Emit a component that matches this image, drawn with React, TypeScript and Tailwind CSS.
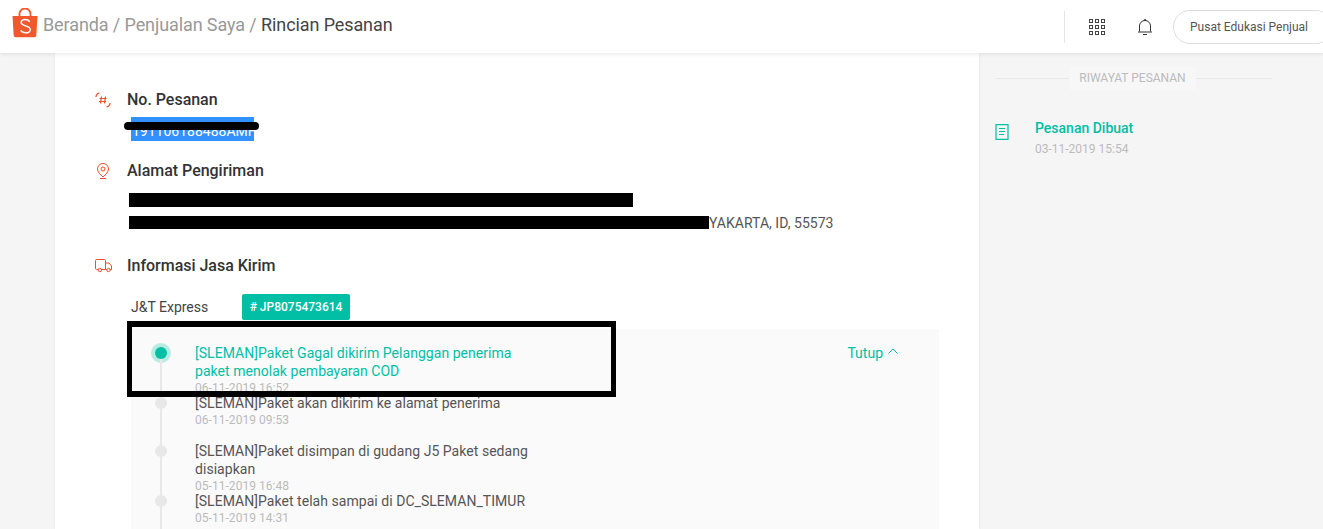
import React from "react";

const events = [
  { text: "[SLEMAN]Paket akan dikirim ke alamat penerima", time: "06-11-2019 09:53", h: "h-[48px]" },
  { text: "[SLEMAN]Paket disimpan di gudang J5 Paket sedang disiapkan", time: "05-11-2019 16:48", h: "h-[50px]" },
  { text: "[SLEMAN]Paket telah sampai di DC_SLEMAN_TIMUR", time: "05-11-2019 14:31", h: "h-[40px]" },
];

function Logo() {
  return (
    <svg width="26" height="30" viewBox="0 0 26 30" className="shrink-0 mb-[8px]">
      <path d="M7.500 8V6a5.500 5.500 0 0 1 11 0v2" fill="none" stroke="#f1582c" strokeWidth="1.800" />
      <path d="M0.500 8h25l-1.200 19.500a2 2 0 0 1-2 1.800H3.700a2 2 0 0 1-2-1.800z" fill="#f1582c" />
      <path d="M17.800 13.800c-1.100-1.400-2.800-2.200-4.600-2.200-2.300 0-4 1.200-4 3 0 4 9 2.600 9 6.800 0 2-2 3.400-4.500 3.400-2.100 0-3.800-.8-5.100-2.300" fill="none" stroke="#fff" strokeWidth="1.500" />
    </svg>
  );
}

function Title({ icon, children, className }: { icon: React.ReactNode; children: React.ReactNode; className?: string }) {
  return (
    <div className={"flex items-center h-[22px] " + (className ?? "")}>
      <div className="w-[32px] flex justify-start shrink-0">{icon}</div>
      <h3 className="text-[16px] font-medium text-[#333] tracking-[-0.02px]">{children}</h3>
    </div>
  );
}

export default function App() {
  return (
    <div className="w-[1323px] h-[529px] overflow-hidden bg-[#f5f5f5] font-['Roboto',sans-serif] flex flex-col">
      <header className="relative z-10 h-[53px] shrink-0 bg-white shadow-[0_1px_4px_rgba(0,0,0,0.1)] flex items-center pl-[12px]">
        <Logo />
        <div className="ml-[5px] text-[18px] text-[#999] flex-1 mb-[4px] tracking-[-0.1px]">
          Beranda / Penjualan Saya / <span className="text-[#444]">Rincian Pesanan</span>
        </div>
        <div className="w-px h-[32px] bg-[#e5e5e5] mr-[24px]" />
        <svg width="16" height="16" viewBox="0 0 16 16" className="mr-[32px]" fill="none" stroke="#444" strokeWidth="1">
          {[0, 6, 12].map((y) =>
            [0, 6, 12].map((x) => <rect key={`${x}-${y}`} x={x + 0.5} y={y + 0.5} width="3" height="3" />)
          )}
        </svg>
        <svg width="16" height="18" viewBox="0 0 16 18" className="mr-[20px]" fill="none" stroke="#333" strokeWidth="1">
          <path d="M2.500 13.500V8a5.500 5.500 0 0 1 11 0v5.500" />
          <path d="M1 14h14" />
          <path d="M6 16.500h4" />
          <path d="M7 2.500c0-1.500 2-1.500 2 0" />
        </svg>
        <button className="w-[160px] h-[34px] -mr-[10px] shrink-0 rounded-full border border-[#ddd] bg-white text-[12px] text-[#555] text-left pl-[16px]">
          Pusat Edukasi Penjual
        </button>
      </header>

      <main className="flex flex-1 min-h-0 pl-[55px]">
        <section className="relative w-[924px] shrink-0 bg-white shadow-[0_0_3px_rgba(0,0,0,0.08)] pl-[40px] pt-[36px] overflow-hidden">
          <Title
            icon={
              <svg width="16" height="16" viewBox="0 0 16 16" fill="none" stroke="#ee4d2d" strokeWidth="1.200">
                <path d="M1 5c0-2 1-3.500 3.500-4" />
                <path d="M15 11c0 2-1 3.500-3.500 4" />
                <path d="M6.500 4.500l-1 7M10.500 4.500l-1 7M4.500 6.500h7M4 9.500h7" />
              </svg>
            }
          >
            No. Pesanan
          </Title>
          <div className="mt-[6px] ml-[36px] w-[123px] h-[24px] bg-[#3390ff] text-white text-[14px] leading-[28px] whitespace-nowrap pl-[1px]">
            191106188488AMH
          </div>
          <Title
            className="mt-[19px]"
            icon={
              <svg width="16" height="16" viewBox="0 0 16 16" fill="none" stroke="#ee4d2d" strokeWidth="1">
                <path d="M8 14C5 11 2.500 9 2.500 6a5.500 5.500 0 0 1 11 0c0 3-2.500 5-5.500 8z" />
                <circle cx="8" cy="6" r="2" />
                <path d="M5 15.500h6" />
              </svg>
            }
          >
            Alamat Pengiriman
          </Title>
          <div className="mt-[11px] ml-[34px] h-[14px] w-[504px] bg-black" />
          <div className="mt-[9px] ml-[34px] flex items-start h-[14px] text-[14px] leading-[15px] text-[#555]">
            <div className="h-[13px] w-[580px] bg-black shrink-0" />
            <span className="tracking-[0.03px]">YAKARTA, ID, 55573</span>
          </div>
          <Title
            className="mt-[25px]"
            icon={
              <svg width="17" height="14" viewBox="0 0 17 14" fill="none" stroke="#ee4d2d" strokeWidth="1">
                <path d="M3 10.500H1.500a1 1 0 0 1-1-1v-8a1 1 0 0 1 1-1h8a1 1 0 0 1 1 1v9H6.500" />
                <path d="M10.500 4h3.500l2.500 3v3.500h-1.500M12 10.500h-1.500" />
                <circle cx="4.800" cy="11" r="1.700" />
                <circle cx="13.500" cy="11" r="1.700" />
              </svg>
            }
          >
            Informasi Jasa Kirim
          </Title>
          <div className="mt-[17px] ml-[36px] flex items-center h-[26px]">
            <span className="w-[111px] text-[14px] text-[#444]">J&amp;T Express</span>
            <span className="h-[26px] w-[108px] rounded-[2px] bg-[#00bfa5] text-white text-[12px] font-medium flex items-center justify-center">
              # JP8075473614
            </span>
          </div>
          <div className="relative mt-[9px] ml-[36px] w-[808px] h-[200px] bg-[#fafafa] pl-[64px] pr-[40px] pt-[15px] flex justify-between">
            <div className="w-[340px] tracking-[0.04px]">
              <div className="relative h-[50px]">
                <span className="absolute -left-[44px] top-[-1px] w-[20px] h-[20px] rounded-full bg-[#b8ece3] flex items-center justify-center">
                  <span className="w-[12px] h-[12px] rounded-full bg-[#00bfa5]" />
                </span>
                <p className="text-[14px] leading-[18px] text-[#00bfa5]">
                  [SLEMAN]Paket Gagal dikirim Pelanggan penerima paket menolak pembayaran COD
                </p>
                <p className="text-[12px] leading-[16px] text-[#bbb]">06-11-2019 16:52</p>
              </div>
              {events.map((e) => (
                <div key={e.time} className={"relative " + e.h}>
                  <span className="absolute -left-[40px] top-[3px] w-[12px] h-[12px] rounded-full bg-[#e8e8e8]" />
                  <p className="text-[14px] leading-[18px] text-[#555]">{e.text}</p>
                  <p className="text-[12px] leading-[16px] text-[#bbb]">{e.time}</p>
                </div>
              ))}
              <span className="absolute left-[29px] top-[30px] bottom-0 w-[2px] bg-[#e8e8e8]" />
            </div>
            <div className="flex items-start gap-[4px] text-[14px] leading-[18px] text-[#00bfa5]">
              Tutup
              <svg width="12" height="16" viewBox="0 0 12 16" fill="none" stroke="#00bfa5" strokeWidth="1">
                <path d="M1.500 9.500L6 5l4.500 4.500" />
              </svg>
            </div>
          </div>
          {/* redaction marks drawn over the content */}
          <span className="absolute left-[69px] top-[69px] w-[135px] h-[8px] rounded-full bg-black" />
          <span className="absolute left-[72px] top-[268px] w-[489px] h-[76px] border-x-[5px] border-y-[6px] border-black" />
        </section>

        <aside className="flex-1 pl-[17px] pr-[51px] pt-[13px]">
          <div className="flex items-center">
            <div className="h-px w-[73px] bg-[#e8e8e8]" />
            <span className="w-[127px] h-[24px] bg-[#f7f7f7] text-[12px] text-[#bbb] flex items-center justify-center">RIWAYAT PESANAN</span>
            <div className="h-px flex-1 bg-[#e8e8e8]" />
          </div>
          <div className="flex mt-[29px]">
            <svg width="14" height="16" viewBox="0 0 14 16" fill="none" stroke="#00bfa5" strokeWidth="1.200" className="mt-[5px] mr-[26px] -ml-[1px]">
              <path d="M1 0.700h12v14.600H1z" />
              <path d="M4 4.500h6M4 7.500h6M4 10.500h5" />
            </svg>
            <div>
              <p className="text-[14px] leading-[18px] font-medium text-[#00bfa5]">Pesanan Dibuat</p>
              <p className="mt-[4px] text-[12px] leading-[16px] text-[#bbb]">03-11-2019 15:54</p>
            </div>
          </div>
        </aside>
      </main>
    </div>
  );
}
